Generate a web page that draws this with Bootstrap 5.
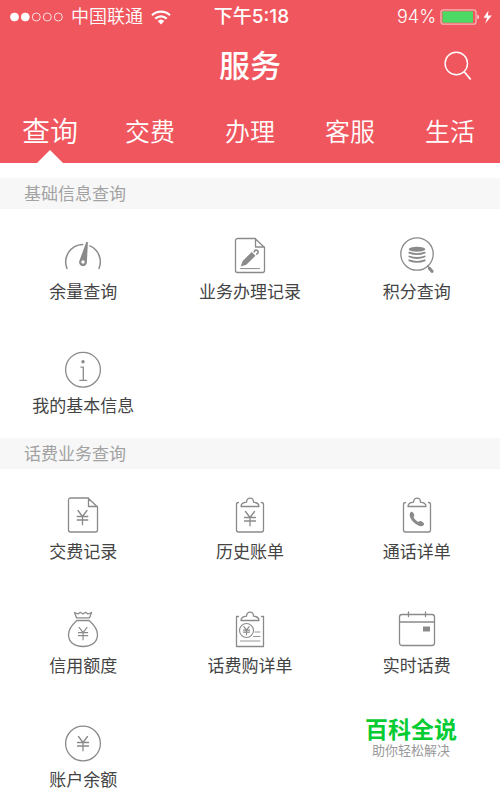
<!DOCTYPE html>
<html lang="zh-CN">
<head>
<meta charset="utf-8">
<meta name="viewport" content="width=device-width, initial-scale=1">
<title>服务</title>
<link rel="stylesheet" href="https://cdn.jsdelivr.net/npm/bootstrap@5.3.0/dist/css/bootstrap.min.css">
<style>
body { font-family: Inter, "Noto Sans CJK SC", sans-serif; color: #444; background: #fff; }
.app-header { background: #f0565e; }
.status-bar { height: 32px; font-size: 18px; line-height: 30px; padding: 2px 7px 0 10px; }
.status-bar .side { flex: 1 1 0; }
.carrier { font-weight: 350; }
.clock { font-size: 19px; }
.title-row { height: 68px; display: grid; grid-template-columns: 1fr auto 1fr; padding: 0 28px; }
.title-row h1 { font-size: 31px; line-height: 68px; font-weight: 500; grid-column: 2; }
.service-tabs { height: 63px; }
.service-tabs .nav-link { color: #fff; background: transparent; border: 0; font-size: 25px; font-weight: 350; line-height: 61px; height: 63px; padding: 2px 0 0; border-radius: 0; width: 100%; }
.service-tabs .nav-link.active { font-size: 28px; position: relative; }
.service-tabs .nav-link.active::after { content: ""; position: absolute; bottom: 0; left: 50%; margin-left: -13px; border: 13px solid transparent; border-top: 0; border-bottom-color: #fff; }
.service-sections { padding-top: 15px; }
.section-title { background: #f7f7f7; color: #a2a2a2; font-size: 17px; line-height: 29px; padding: 2px 24px 0; font-weight: 400; }
.service-grid { display: grid; grid-template-columns: repeat(3, 1fr); row-gap: 50px; padding-top: 28px; }
.service-grid.spaced { padding-bottom: 23px; }
.service { display: flex; flex-direction: column; align-items: center; gap: 9px; color: #444; font-size: 17px; line-height: 18px; text-decoration: none; }
.line-icon { width: 38px; height: 37px; fill: none; stroke: #8a8a8a; stroke-width: 1.3; stroke-linejoin: round; stroke-linecap: round; overflow: visible; }
.line-icon .solid { fill: #8a8a8a; stroke: none; }
.promo { position: absolute; right: 43px; bottom: 32px; text-align: center; }
.promo strong { display: block; color: #06cc33; font-size: 23px; line-height: 26px; }
.promo span { display: block; color: #999; font-size: 13px; line-height: 14px; }
</style>
<script src="https://cdn.jsdelivr.net/npm/bootstrap@5.3.0/dist/js/bootstrap.bundle.min.js"></script>
</head>
<body>
<svg class="d-none" aria-hidden="true">
  <symbol id="yen" viewBox="0 0 12 16"><path d="M1.5 1 6 7 10.5 1M6 7v8.500M.5 7h11M.5 10.500h11"/></symbol>
</svg>
<div class="position-relative">
<header class="app-header text-white">
  <div class="status-bar d-flex align-items-center">
    <div class="side d-flex align-items-center">
      <svg width="53" height="10" viewBox="0 0 53 10" fill="none" stroke="#fff" stroke-width=".8" role="img" aria-label="信号">
        <circle cx="4.500" cy="5" r="4" fill="#fff"/><circle cx="15.300" cy="5" r="4" fill="#fff"/><circle cx="26.300" cy="5" r="4"/><circle cx="37.300" cy="5" r="4"/><circle cx="48.300" cy="5" r="4"/>
      </svg>
      <span class="carrier ms-2">中国联通</span>
      <svg class="ms-2" width="20" height="15" viewBox="0 0 20 15" fill="none" stroke="#fff" stroke-width="2.200" role="img" aria-label="Wi-Fi">
        <path d="M1 5.300a13 13 0 0 1 18 0M4.300 8.600a8.300 8.300 0 0 1 11.400 0"/><path fill="#fff" stroke="none" d="M6.700 11.100a4.800 4.800 0 0 1 6.600 0L10 14.400z"/>
      </svg>
    </div>
    <span class="clock fw-medium">下午5:18</span>
    <div class="side d-flex align-items-center justify-content-end">
      <span class="carrier">94%</span>
      <svg class="ms-1" width="53" height="16" viewBox="0 0 53 16" role="img" aria-label="电池">
        <rect x="1" y=".8" width="35" height="14.400" rx="2.500" fill="none" stroke="#f9b4b6" stroke-width="1.300"/>
        <path fill="#4cd964" d="M2.500 2.300h30.500v11.400H2.500z"/><path fill="#fff" d="M37.500 5.500a3 3 0 0 1 0 5z"/>
        <path fill="#fff" d="M48.500 1.500 43.500 8.800h3.600l-2 6 6.700-8.300h-3.900z"/>
      </svg>
    </div>
  </div>
  <div class="title-row">
    <h1 class="m-0">服务</h1>
    <button type="button" class="btn p-0 border-0 ms-auto" aria-label="搜索">
      <svg class="d-block" width="28" height="30" viewBox="0 0 28 30" fill="none" stroke="#fff" stroke-width="1.400"><circle cx="12.300" cy="12.500" r="11.200"/><path stroke-width="1.800" d="m20 20.500 6.700 8"/></svg>
    </button>
  </div>
  <ul class="service-tabs nav nav-fill flex-nowrap row g-0 row-cols-5">
    <li class="nav-item col"><button type="button" class="nav-link active" aria-current="page">查询</button></li>
    <li class="nav-item col"><button type="button" class="nav-link">交费</button></li>
    <li class="nav-item col"><button type="button" class="nav-link">办理</button></li>
    <li class="nav-item col"><button type="button" class="nav-link">客服</button></li>
    <li class="nav-item col"><button type="button" class="nav-link">生活</button></li>
  </ul>
</header>
<main class="service-sections">
  <section>
    <h2 class="section-title m-0">基础信息查询</h2>
    <div class="service-grid spaced">
      <a class="service" href="#"><svg class="line-icon" viewBox="0 0 38 37">
        <path stroke-width="1.500" d="M3 31.500A17.500 17.500 0 0 1 18.600 7.500M26 8.900A17.500 17.500 0 0 1 35 31.500"/>
        <path class="solid" fill-rule="evenodd" d="M22.300 5h1.600l-1 20.300A3.900 3.900 0 1 1 15.300 24zM19 23.200a1.700 1.700 0 1 0 0 3.500 1.700 1.700 0 0 0 0-3.500z"/></svg>余量查询</a>
      <a class="service" href="#"><svg class="line-icon" viewBox="0 0 38 37">
        <path d="M24 1.500H6.500a2 2 0 0 0-2 2v30a2 2 0 0 0 2 2h25a2 2 0 0 0 2-2V10.500zM24.500 1.500v8.500h9"/>
        <path class="solid" d="m9.700 29.500 2-5.500 9-9 3.800 3.800-9.200 9z"/><path stroke-width="1.600" d="M23.200 14.800a2 2 0 1 1 2.500 2.300"/><path stroke-width="1" d="M9.500 31.600h19"/></svg>业务办理记录</a>
      <a class="service" href="#"><svg class="line-icon" viewBox="0 0 38 37">
        <circle cx="19" cy="17" r="16.200"/><path d="m29.500 29 2.500 2"/><path stroke-width="3.200" d="m31.500 31.500 2.500 2.800"/>
        <ellipse class="solid" cx="19" cy="12.300" rx="8.300" ry="2.500"/>
        <path stroke-width="1.800" d="M11.300 15.700q7.700 3 15.400 0M11.300 19.500q7.700 3 15.400 0M11.300 23.300q7.700 3 15.400 0"/></svg>积分查询</a>
      <a class="service" href="#"><svg class="line-icon" viewBox="0 0 38 37">
        <circle cx="19" cy="18.700" r="17.400"/><circle class="solid" cx="19" cy="10.700" r="1.700"/><path d="M17 16.200h2.300v13M15.800 29.300h6.800"/></svg>我的基本信息</a>
    </div>
  </section>
  <section>
    <h2 class="section-title m-0">话费业务查询</h2>
    <div class="service-grid">
      <a class="service" href="#"><svg class="line-icon" viewBox="0 0 38 37">
        <path d="M24 1H6.500a2 2 0 0 0-2 2v30a2 2 0 0 0 2 2h25a2 2 0 0 0 2-2V10zM24.500 1v8.500h9"/><use href="#yen" x="12.500" y="12.500" width="12" height="16"/></svg>交费记录</a>
      <a class="service" href="#"><svg class="line-icon" viewBox="0 0 38 37">
        <path d="M7.500 5.500a2 2 0 0 0-2 2V33a2 2 0 0 0 2 2h23a2 2 0 0 0 2-2V7.500a2 2 0 0 0-2-2M10 9.500c0-3 2-4 5.500-4.300 0-5.500 7-5.500 7 0C26 5.500 28 6.500 28 9.500z"/><use href="#yen" x="13" y="13.500" width="12" height="16"/></svg>历史账单</a>
      <a class="service" href="#"><svg class="line-icon" viewBox="0 0 38 37">
        <path d="M7.500 5.500a2 2 0 0 0-2 2V33a2 2 0 0 0 2 2h23a2 2 0 0 0 2-2V7.500a2 2 0 0 0-2-2M10 9.500c0-3 2-4 5.500-4.300 0-5.500 7-5.500 7 0C26 5.500 28 6.500 28 9.500z"/>
        <path class="solid" d="M13.300 14.800c1.400-.6 3.700 3.200 2.900 4.400l-.7.900c1 2.300 3 4.300 5 5l1-.9c1.300-.8 5.200 2 4.600 3.200-1 1.900-3.500 2.200-5.800 1.100-4-1.900-7.500-5.500-8.500-9.400-.4-1.900.1-3.600 1.500-4.300z"/></svg>通话详单</a>
      <a class="service" href="#"><svg class="line-icon" viewBox="0 0 38 37">
        <path d="M12.500 6.800 10.500 1.500 14 3l2.300-1.700L19 3l2.700-1.700L24 3l3.500-1.500-2 5.300zM12.800 9.500h12.400C29 13 33.500 17.500 33.500 23.500c0 7.500-5.500 12-14.500 12S4.500 31 4.500 23.500C4.500 17.500 9 13 12.800 9.500z"/><use href="#yen" x="13.800" y="15.500" width="10.500" height="14"/></svg>信用额度</a>
      <a class="service" href="#"><svg class="line-icon" viewBox="0 0 38 37">
        <path d="M7.500 5.500h-2v30h27v-30h-2M10 9.500c0-3 2-4 5.500-4.300 0-5.500 7-5.500 7 0C26 5.500 28 6.500 28 9.500z"/><circle cx="15.500" cy="19.500" r="7" stroke-width="1.100"/><use href="#yen" x="12" y="15" width="7" height="9.500" stroke-width="2"/><path stroke-width=".9" d="M24 21h5M22.500 25.500H29M9.500 30H29"/></svg>话费购详单</a>
      <a class="service" href="#"><svg class="line-icon" viewBox="0 0 38 37">
        <rect x="1.500" y="3.500" width="35" height="31" rx="2.500"/><path d="M1.500 11h35M10.500 1v4.500M27.500 1v4.500"/><path class="solid" d="M25 15.500h7v5h-7z"/></svg>实时话费</a>
      <a class="service" href="#"><svg class="line-icon" viewBox="0 0 38 37">
        <circle cx="19" cy="18.500" r="17.400"/><use href="#yen" x="13" y="10.500" width="12" height="16"/></svg>账户余额</a>
    </div>
  </section>
</main>
<aside class="promo"><strong>百科全说</strong><span>助你轻松解决</span></aside>
</div>
</body>
</html>
